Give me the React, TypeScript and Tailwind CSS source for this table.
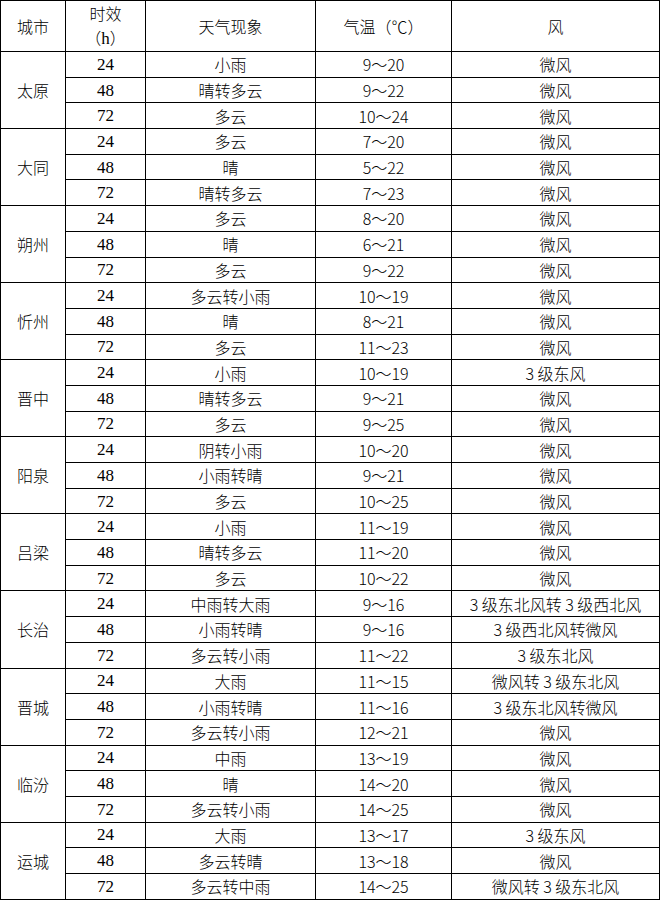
const cities: { name: string; rows: [string, string, string, string][] }[] = [
  { name: '太原', rows: [['24', '小雨', '9～20', '微风'], ['48', '晴转多云', '9～22', '微风'], ['72', '多云', '10～24', '微风']] },
  { name: '大同', rows: [['24', '多云', '7～20', '微风'], ['48', '晴', '5～22', '微风'], ['72', '晴转多云', '7～23', '微风']] },
  { name: '朔州', rows: [['24', '多云', '8～20', '微风'], ['48', '晴', '6～21', '微风'], ['72', '多云', '9～22', '微风']] },
  { name: '忻州', rows: [['24', '多云转小雨', '10～19', '微风'], ['48', '晴', '8～21', '微风'], ['72', '多云', '11～23', '微风']] },
  { name: '晋中', rows: [['24', '小雨', '10～19', '3 级东风'], ['48', '晴转多云', '9～21', '微风'], ['72', '多云', '9～25', '微风']] },
  { name: '阳泉', rows: [['24', '阴转小雨', '10～20', '微风'], ['48', '小雨转晴', '9～21', '微风'], ['72', '多云', '10～25', '微风']] },
  { name: '吕梁', rows: [['24', '小雨', '11～19', '微风'], ['48', '晴转多云', '11～20', '微风'], ['72', '多云', '10～22', '微风']] },
  { name: '长治', rows: [['24', '中雨转大雨', '9～16', '3 级东北风转 3 级西北风'], ['48', '小雨转晴', '9～16', '3 级西北风转微风'], ['72', '多云转小雨', '11～22', '3 级东北风']] },
  { name: '晋城', rows: [['24', '大雨', '11～15', '微风转 3 级东北风'], ['48', '小雨转晴', '11～16', '3 级东北风转微风'], ['72', '多云转小雨', '12～21', '微风']] },
  { name: '临汾', rows: [['24', '中雨', '13～19', '微风'], ['48', '晴', '14～20', '微风'], ['72', '多云转小雨', '14～25', '微风']] },
  { name: '运城', rows: [['24', '大雨', '13～17', '3 级东风'], ['48', '多云转晴', '13～18', '微风'], ['72', '多云转中雨', '14～25', '微风转 3 级东北风']] },
];

const cjk = "font-['Noto_Sans_CJK_SC',sans-serif]";
const serif = "font-['Liberation_Serif','Noto_Sans_CJK_SC',serif] text-[17px] font-normal";

export default function App() {
  return (
    <div className="bg-white w-[661px] h-[904px] text-black">
      <table className={`border-collapse text-[16px] leading-none font-light ${cjk}`}>
        <colgroup>
          <col className="w-[65px]" />
          <col className="w-[80px]" />
          <col className="w-[170px]" />
          <col className="w-[136px]" />
          <col className="w-[208px]" />
        </colgroup>
        <thead>
          <tr className="h-[51px]">
            <th className="border border-black font-light p-0">城市</th>
            <th className="border border-black font-light p-0">
              <div className="flex flex-col items-center gap-[8px]">
                <span>时效</span>
                <span className="font-light">
                  （<span className={serif}>h</span>）
                </span>
              </div>
            </th>
            <th className="border border-black font-light p-0">天气现象</th>
            <th className="border border-black font-light p-0">气温（℃）</th>
            <th className="border border-black font-light p-0">风</th>
          </tr>
        </thead>
        <tbody>
          {cities.map((c) =>
            c.rows.map((r, i) => (
              <tr key={c.name + i} className="h-[25.7px]">
                {i === 0 && (
                  <td rowSpan={3} className="border border-black text-center p-0">
                    {c.name}
                  </td>
                )}
                <td className={`border border-black text-center p-0 ${serif}`}>{r[0]}</td>
                <td className="border border-black text-center p-0">{r[1]}</td>
                <td className="border border-black text-center p-0">{r[2]}</td>
                <td className="border border-black text-center p-0">{r[3]}</td>
              </tr>
            ))
          )}
        </tbody>
      </table>
    </div>
  );
}
